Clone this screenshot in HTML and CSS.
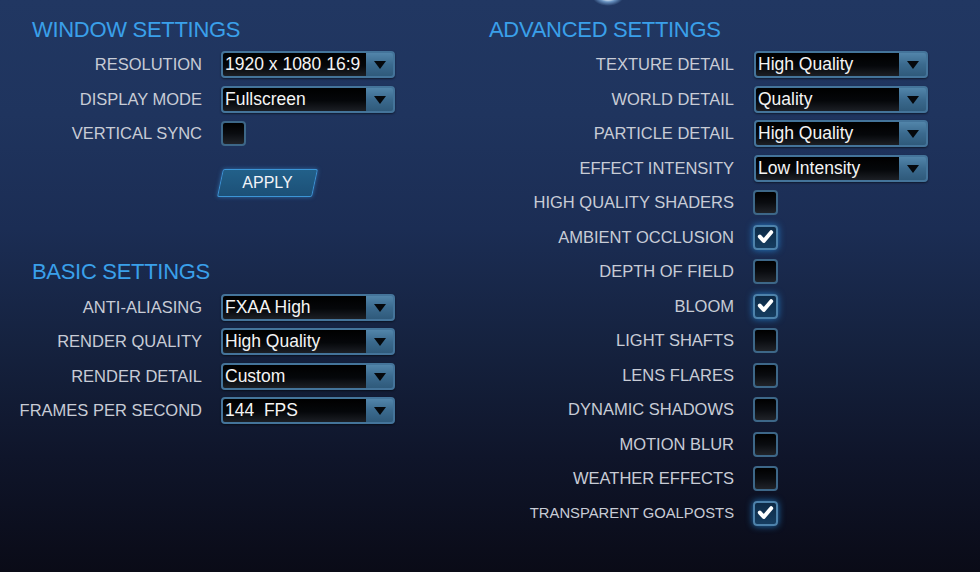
FILE: index.html
```html
<!DOCTYPE html>
<html>
<head>
<meta charset="utf-8">
<link rel="stylesheet" href="styles.css">
</head>
<body>
<div class="glow"></div>
<main class="page">
  <section class="col left">
    <h2 class="heading">WINDOW SETTINGS</h2>
    <div class="rows">
      <div class="row"><span class="label">RESOLUTION</span><div class="select"><span class="value">1920 x 1080 16:9</span><span class="arrow"></span></div></div>
      <div class="row"><span class="label">DISPLAY MODE</span><div class="select"><span class="value">Fullscreen</span><span class="arrow"></span></div></div>
      <div class="row"><span class="label">VERTICAL SYNC</span><div class="check"></div></div>
    </div>
    <div class="apply-wrap"><button class="apply"><span>APPLY</span></button></div>
    <h2 class="heading basic">BASIC SETTINGS</h2>
    <div class="rows">
      <div class="row"><span class="label">ANTI-ALIASING</span><div class="select"><span class="value">FXAA High</span><span class="arrow"></span></div></div>
      <div class="row"><span class="label">RENDER QUALITY</span><div class="select"><span class="value">High Quality</span><span class="arrow"></span></div></div>
      <div class="row"><span class="label">RENDER DETAIL</span><div class="select"><span class="value">Custom</span><span class="arrow"></span></div></div>
      <div class="row"><span class="label">FRAMES PER SECOND</span><div class="select"><span class="value">144&nbsp;&nbsp;FPS</span><span class="arrow"></span></div></div>
    </div>
  </section>
  <section class="col right">
    <h2 class="heading">ADVANCED SETTINGS</h2>
    <div class="rows">
      <div class="row"><span class="label">TEXTURE DETAIL</span><div class="select"><span class="value">High Quality</span><span class="arrow"></span></div></div>
      <div class="row"><span class="label">WORLD DETAIL</span><div class="select"><span class="value">Quality</span><span class="arrow"></span></div></div>
      <div class="row"><span class="label">PARTICLE DETAIL</span><div class="select"><span class="value">High Quality</span><span class="arrow"></span></div></div>
      <div class="row"><span class="label">EFFECT INTENSITY</span><div class="select"><span class="value">Low Intensity</span><span class="arrow"></span></div></div>
      <div class="row"><span class="label">HIGH QUALITY SHADERS</span><div class="check"></div></div>
      <div class="row"><span class="label">AMBIENT OCCLUSION</span><div class="check on"><svg viewBox="0 0 24 24"><polyline points="5.5,11.5 10,16.5 18.5,6.5"/></svg></div></div>
      <div class="row"><span class="label">DEPTH OF FIELD</span><div class="check"></div></div>
      <div class="row"><span class="label">BLOOM</span><div class="check on"><svg viewBox="0 0 24 24"><polyline points="5.5,11.5 10,16.5 18.5,6.5"/></svg></div></div>
      <div class="row"><span class="label">LIGHT SHAFTS</span><div class="check"></div></div>
      <div class="row"><span class="label">LENS FLARES</span><div class="check"></div></div>
      <div class="row"><span class="label">DYNAMIC SHADOWS</span><div class="check"></div></div>
      <div class="row"><span class="label">MOTION BLUR</span><div class="check"></div></div>
      <div class="row"><span class="label">WEATHER EFFECTS</span><div class="check"></div></div>
      <div class="row"><span class="label small">TRANSPARENT GOALPOSTS</span><div class="check on"><svg viewBox="0 0 24 24"><polyline points="5.5,11.5 10,16.5 18.5,6.5"/></svg></div></div>
    </div>
  </section>
</main>
</body>
</html>
```

FILE: styles.css
```css
html, body {
  margin: 0;
  padding: 0;
  width: 980px;
  height: 572px;
  overflow: hidden;
}
body {
  background: linear-gradient(180deg, #213762 0%, #1f345e 20%, #1b2d54 40%, #15223f 60%, #0f152a 80%, #0a0b17 100%);
  font-family: "Liberation Sans", Arial, sans-serif;
  position: relative;
}
.glow {
  position: absolute;
  left: 592px;
  top: -14px;
  width: 32px;
  height: 20px;
  border-radius: 50%;
  background: radial-gradient(ellipse at center, #ffffff 0%, #f4faff 22%, rgba(150,205,255,0.6) 42%, rgba(60,120,200,0) 70%);
}
.page {
  display: flex;
}
.col.left {
  width: 480px;
}
.col.right {
  width: 500px;
}
.heading {
  margin: 18px 0 5.25px 32px;
  font-size: 22px;
  line-height: 24px;
  font-weight: normal;
  letter-spacing: -0.3px;
  color: #3aa0ea;
}
.right .heading {
  margin-left: 9px;
}
.heading.basic {
  margin-top: 63px;
  margin-bottom: 5.75px;
}
.row {
  display: grid;
  grid-template-columns: 202px auto;
  column-gap: 19px;
  align-items: center;
  height: 34.5px;
}
.right .row {
  grid-template-columns: 254px auto;
  column-gap: 20px;
}
.label {
  text-align: right;
  font-size: 16.5px;
  color: #c8ccd6;
  white-space: nowrap;
}
.label.small {
  font-size: 14.8px;
}
.select {
  display: flex;
  width: 174px;
  height: 27px;
  box-sizing: border-box;
  border: 2px solid #44749a;
  border-radius: 4px;
  background: linear-gradient(180deg, #5285aa 0%, #3b6a8e 50%, #2f5a7b 100%);
  box-shadow: 0 1px 2px rgba(0,0,0,0.5);
}
.value {
  flex: 1;
  background: linear-gradient(180deg, #000000 0%, #05070a 55%, #1c1f25 100%);
  border-radius: 2px 0 0 2px;
  color: #f4f4f4;
  font-size: 17.5px;
  line-height: 23px;
  padding-left: 2px;
  white-space: nowrap;
  overflow: hidden;
}
.arrow {
  width: 27px;
  display: flex;
  align-items: center;
  justify-content: center;
}
.arrow::after {
  content: "";
  width: 0;
  height: 0;
  border-left: 6px solid transparent;
  border-right: 6px solid transparent;
  border-top: 8px solid #05080c;
  margin-top: 1px;
}
.check {
  width: 25px;
  height: 25px;
  box-sizing: border-box;
  border: 2px solid #3d6788;
  border-radius: 4px;
  background: linear-gradient(180deg, #000000 0%, #0a0c10 50%, #202329 100%);
  display: flex;
  align-items: center;
  justify-content: center;
}
.right .check {
  margin-left: -1px;
}
.check.on {
  background: linear-gradient(180deg, #0d2a46 0%, #163d60 100%);
  border-color: #4d82ab;
  box-shadow: 0 0 7px rgba(40,150,235,0.75);
}
.check svg {
  width: 22px;
  height: 22px;
}
.check svg polyline {
  fill: none;
  stroke: #ffffff;
  stroke-width: 4.5;
  stroke-linecap: round;
  stroke-linejoin: round;
}
.apply-wrap {
  padding: 18.25px 0 0 217px;
}
.apply {
  position: relative;
  width: 101px;
  height: 28px;
  border: none;
  background: transparent;
  padding: 0;
  color: #f2f4f8;
  font-family: "Liberation Sans", Arial, sans-serif;
  font-size: 16px;
}
.apply::before {
  content: "";
  position: absolute;
  left: 3px;
  right: 3px;
  top: 0;
  bottom: 0;
  transform: skewX(-12deg);
  border: 1px solid #3c95d6;
  border-radius: 2px;
  background: linear-gradient(180deg, #226089 0%, #1c5077 100%);
  box-shadow: 0 0 4px rgba(60,150,220,0.6);
}
.apply span {
  position: relative;
}
```
